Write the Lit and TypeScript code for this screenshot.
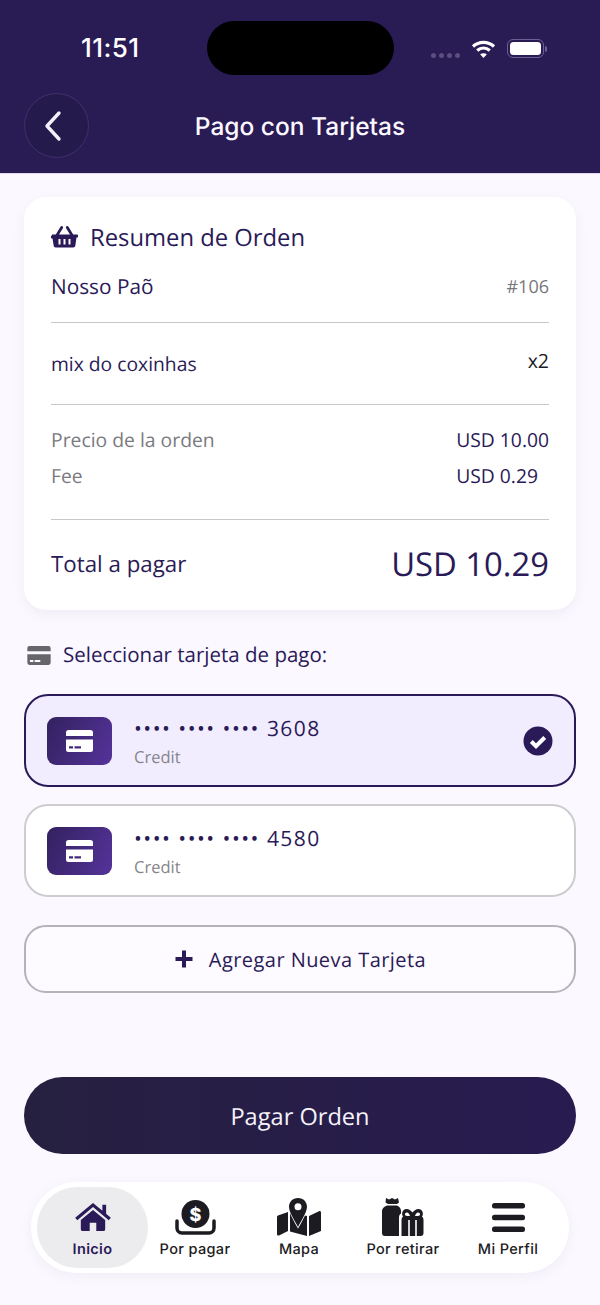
import { LitElement, html, css, svg } from "lit";
import { customElement } from "lit/decorators.js";

const cardGlyph = svg`<path d="M0 2.500A2.500 2.500 0 0 1 2.500 0h22A2.500 2.500 0 0 1 27 2.500V6H0zM0 9.500h27v10a2.500 2.500 0 0 1-2.500 2.500h-22A2.500 2.500 0 0 1 0 19.500zM3 16.200v2.200h4v-2.200zM8.500 16.200v2.200h6.500v-2.200z" fill-rule="evenodd"/>`;

@customElement("app-root")
export class AppRoot extends LitElement {
  static styles = css`
    :host { display: block; width: 600px; height: 1305px; overflow: hidden; background: #fbf8ff; font-family: "Open Sans", sans-serif; color: #2a1a57; text-rendering: geometricPrecision; }
    .top { height: 174px; background: #291b54; box-sizing: border-box; border-bottom: 1px solid #e2d6f2; position: relative; }
    .status { height: 97px; position: relative; display: flex; align-items: center; }
    .time { position: absolute; left: 81px; top: 34px; font: 500 26px/30px Inter, sans-serif; color: #fff; letter-spacing: .4px; }
    .island { position: absolute; left: 206.500px; top: 21px; width: 187.500px; height: 54px; border-radius: 27px; background: #000; }
    .dots { position: absolute; left: 431px; top: 53px; display: flex; gap: 3px; }
    .dots i { width: 5px; height: 5px; border-radius: 50%; background: #5b4d80; display: block; }
    .wifi { position: absolute; left: 471px; top: 38.500px; }
    .batt { position: absolute; left: 507px; top: 39px; width: 37px; height: 19px; box-sizing: border-box; border: 1.500px solid #6d5f94; border-radius: 6px; padding: 2px; }
    .batt b { display: block; height: 100%; background: #fff; border-radius: 3.500px; }
    .nub { position: absolute; left: 545px; top: 45.500px; width: 2px; height: 6px; border-radius: 0 2px 2px 0; background: #6d5f94; }
    .nav { position: relative; height: 76px; display: flex; align-items: center; justify-content: center; }
    .back { position: absolute; left: 24px; top: -4px; width: 65px; height: 65px; box-sizing: border-box; border-radius: 50%; border: 1px solid #40306f; background: #251a4c; display: flex; align-items: center; justify-content: center; }
    .back svg { margin-right: 5px; }
    .title { font: 500 24.500px/30px Inter, sans-serif; color: #fbf8ff; margin-top: -19px; }

    .main { padding: 23px 24px 0; }
    .card { background: #fff; border-radius: 22px; height: 413px; box-sizing: border-box; padding: 23px 27px 0; box-shadow: 0 4px 14px rgba(42,26,87,.05); }
    .heading { display: flex; align-items: center; gap: 12px; height: 34px; font-size: 23.800px; }
    .row { display: flex; justify-content: space-between; align-items: center; }
    .r1 { height: 36px; padding: 15px 0 17px; font-size: 20.800px; border-bottom: 1px solid #c8c8c8; }
    .order { font-size: 18px; color: #77777c; }
    .r2 { height: 81px; font-size: 19.300px; border-bottom: 1px solid #c8c8c8; }
    .x2 { color: #1c1c24; font-size: 19.500px; margin-top: -6px; }
    .prices { height: 115px; border-bottom: 1px solid #c8c8c8; padding-top: 16px; box-sizing: border-box; }
    .p { height: 36px; font-size: 19.350px; color: #7a7a7f; }
    .p .v { color: #2a1a57; font-size: 19.300px; }
    .fee { padding-right: 11px; }
    .total { height: 86px; font-size: 22.300px; }
    .total .v { font-size: 32.800px; }

    .sel { display: flex; align-items: center; gap: 12px; margin: 28px 0 0 3px; height: 34px; font-size: 20.500px; }
    .pay { box-sizing: border-box; height: 93px; border-radius: 24px; border: 2px solid #2a1a57; background: #f1edff; margin-top: 22px; display: flex; align-items: center; padding: 0 21px 0 21px; position: relative; }
    .pay.off { background: #fff; border-color: #cdcdd0; margin-top: 17px; }
    .ic { width: 65px; height: 48px; border-radius: 9px; background: linear-gradient(115deg, #33215f, #55339a); display: flex; align-items: center; justify-content: center; color: #fff; }
    .info { margin-left: 22px; flex: 1; }
    .num { font-size: 21px; line-height: 28px; letter-spacing: 1.450px; color: #2a1a57; margin-top: 2px; }
    .cr { font-size: 16.500px; line-height: 24px; color: #85858a; margin-top: 2px; }
    .add { box-sizing: border-box; height: 68px; margin-top: 28px; border-radius: 22px; border: 2px solid #b5b3ba; background: #fdfbff; display: flex; align-items: center; justify-content: center; gap: 15px; font-size: 20px; letter-spacing: .45px; }
    .go { height: 77px; margin-top: 84px; border-radius: 39px; background: linear-gradient(90deg, #262040, #281b50); color: #f6f3fb; display: flex; align-items: center; justify-content: center; font-size: 23.600px; }

    .tabs { margin: 28px 31px 0 31px; height: 91px; border-radius: 46px; background: #fff; box-shadow: 0 3px 14px rgba(42,26,87,.05); display: grid; grid-template-columns: 111px 94px 114px 94px 116px; align-items: center; padding-left: 6px; box-sizing: border-box; }
    .tab { display: flex; flex-direction: column; align-items: center; height: 81px; box-sizing: border-box; padding-top: 11px; font: 500 14.500px/18px Inter, sans-serif; color: #1d1b22; letter-spacing: .35px; gap: 5px; }
    .slot { height: 38px; display: flex; align-items: center; justify-content: center; }
    .tab svg { display: block; }
    .tab.on { background: #ececef; border-radius: 40px; color: #2a1a57; font-weight: 600; }
  `;

  private card(num: string, on: boolean) {
    return html`<div class="pay ${on ? "" : "off"}">
      <div class="ic"><svg width="27" height="22" viewBox="0 0 27 22" fill="currentColor">${cardGlyph}</svg></div>
      <div class="info"><div class="num">•••• •••• •••• ${num}</div><div class="cr">Credit</div></div>
      ${on ? html`<svg width="30" height="30" viewBox="0 0 30 30"><circle cx="15" cy="15" r="14.500" fill="#2a1a57"/><path d="M8.300 15.500l4.700 4.700 8.700-8.700" fill="none" stroke="#fff" stroke-width="4"/></svg>` : ""}
    </div>`;
  }

  render() {
    return html`
      <div class="top">
        <div class="status">
          <div class="time">11:51</div>
          <div class="island"></div>
          <div class="dots"><i></i><i></i><i></i><i></i></div>
          <svg class="wifi" width="25" height="20" viewBox="0 0 25 20" fill="none" stroke="#fff" stroke-width="3.200"><path d="M2 7.500c6-5.500 15-5.500 21 0"/><path d="M6.200 11.500c3.800-3.300 8.800-3.300 12.600 0"/><path d="M12.500 19l-3.400-3.700c2-1.500 4.800-1.500 6.800 0z" fill="#fff" stroke="none"/></svg>
          <div class="batt"><b></b></div><div class="nub"></div>
        </div>
        <div class="nav">
          <div class="back"><svg width="22" height="32" viewBox="0 0 22 32" fill="none" stroke="#f4f0fb" stroke-width="3.400" stroke-linecap="round" stroke-linejoin="round"><path d="M16 3L4 16l12 13"/></svg></div>
          <div class="title">Pago con Tarjetas</div>
        </div>
      </div>
      <div class="main">
        <div class="card">
          <div class="heading"><svg width="27" height="22" viewBox="0 0 27 22" fill="#2a1a57"><path d="M1 8.500h3.800L9.500.8c.4-.7 1.300-.9 1.900-.5.7.4.9 1.300.5 1.900L8 8.500h11l-3.900-6.300c-.4-.6-.2-1.500.5-1.900.6-.4 1.500-.2 1.900.5l4.700 7.700H26c.6 0 1 .4 1 1v1c0 .6-.4 1-1 1h-.5l-1.200 8.300c-.1 1-1 1.700-2 1.700H4.700c-1 0-1.900-.7-2-1.700L1.500 12.500H1c-.6 0-1-.4-1-1v-1c0-.6.4-1 1-1zM7.500 13v5.500h2V13zM12.500 13v5.500h2V13zM17.500 13v5.500h2V13z" fill-rule="evenodd"/></svg>Resumen de Orden</div>
          <div class="row r1"><span>Nosso Paõ</span><span class="order">#106</span></div>
          <div class="row r2"><span>mix do coxinhas</span><span class="x2">x2</span></div>
          <div class="prices">
            <div class="row p"><span>Precio de la orden</span><span class="v">USD 10.00</span></div>
            <div class="row p"><span>Fee</span><span class="v fee">USD 0.29</span></div>
          </div>
          <div class="row total"><span>Total a pagar</span><span class="v">USD 10.29</span></div>
        </div>
        <div class="sel"><svg width="24" height="19" viewBox="0 0 27 22" fill="#66666b">${cardGlyph}</svg>Seleccionar tarjeta de pago:</div>
        ${this.card("3608", true)}
        ${this.card("4580", false)}
        <div class="add"><svg width="20" height="20" viewBox="0 0 20 20" fill="#2a1a57"><path d="M8 1.500h4V8h6.500v4H12v6.500H8V12H1.500V8H8z"/></svg>Agregar Nueva Tarjeta</div>
        <div class="go">Pagar Orden</div>
      </div>
      <div class="tabs">
        <div class="tab on"><div class="slot"><svg width="38" height="30" viewBox="0 0 38 32" fill="#2a1a57"><path d="M19 1L29 9.300V3h4v9.600l5 4.200-2.200 2.600L19 5.300 2.200 19.400 0 16.800z"/><path d="M19 8.500L6 19.300V29a2 2 0 0 0 2 2h7.500v-9h7v9H30a2 2 0 0 0 2-2v-9.700z"/></svg></div>Inicio</div>
        <div class="tab"><div class="slot"><svg width="43" height="35" viewBox="0 0 43 35"><circle cx="21.500" cy="14" r="14" fill="#1d1b22"/><path d="M3 21v7a5 5 0 0 0 5 5h27a5 5 0 0 0 5-5v-7" fill="none" stroke="#1d1b22" stroke-width="3.500" stroke-linecap="round"/><text x="21.500" y="20.500" text-anchor="middle" font-family="Inter, sans-serif" font-weight="800" font-size="18" fill="#fff">$</text></svg></div>Por pagar</div>
        <div class="tab"><div class="slot"><svg width="44" height="38" viewBox="0 0 44 38"><path d="M1 17.500L11 14v19L2 37.500c-1 .4-2-.3-2-1.300V19c0-.7.400-1.300 1-1.500zM13 14l17 4v20l-17-4.500zM32 18l10-4.800c1-.4 2 .3 2 1.300V33L32 38z" fill="#1d1b22"/><path d="M21 0c5.500 0 9 4 9 8.800 0 5.200-5.500 13.500-9 20.200-3.500-6.700-9-15-9-20.200C12 4 15.500 0 21 0zm0 5.200a3.500 3.500 0 1 0 0 7 3.500 3.500 0 0 0 0-7z" fill="#1d1b22" fill-rule="evenodd" stroke="#fff" stroke-width="1.600" paint-order="stroke"/></svg></div>Mapa</div>
        <div class="tab"><div class="slot"><svg width="42" height="38" viewBox="0 0 42 38" fill="#1d1b22"><path d="M4 0l3 1.500L10 0l3 1.500L16 0l1 4.500-2 1.500H6L3.500 4.500z"/><path d="M5 7.500h10c2.500 1 4 3 4 5.500v2.500c-1.500 1-2 2.500-2 4V38H3a3 3 0 0 1-3-3V13c0-2.500 2-4.500 5-5.500z"/><path d="M19.500 38V22c0-1.500.5-2.500 1.500-3.200-.6-1-.9-2-.9-3 0-2.800 2-4.800 4.700-4.800 2 0 3.800 1.200 5.700 3.500 1.900-2.300 3.700-3.500 5.700-3.500 2.700 0 4.700 2 4.700 4.800 0 1-.3 2-.9 3 1 .7 1.500 1.700 1.500 3.200v13a3 3 0 0 1-3 3zM25 14.500c-1.300 0-2 .8-2 1.800 0 1 .7 1.700 2 1.700h3c-.7-2-1.700-3.500-3-3.500zM36 14.500c-1.300 0-2.300 1.500-3 3.500h3c1.300 0 2-.7 2-1.700 0-1-.7-1.800-2-1.800z" fill-rule="evenodd"/><path d="M27 22v16M34 22v16" stroke="#fff" stroke-width="1.600"/></svg></div>Por retirar</div>
        <div class="tab"><div class="slot"><svg width="33" height="29" viewBox="0 0 33 29" fill="#1d1b22"><rect y="0" width="33" height="5.500" rx="2.500"/><rect y="11.750" width="33" height="5.500" rx="2.500"/><rect y="23.500" width="33" height="5.500" rx="2.500"/></svg></div>Mi Perfil</div>
      </div>
    `;
  }
}
